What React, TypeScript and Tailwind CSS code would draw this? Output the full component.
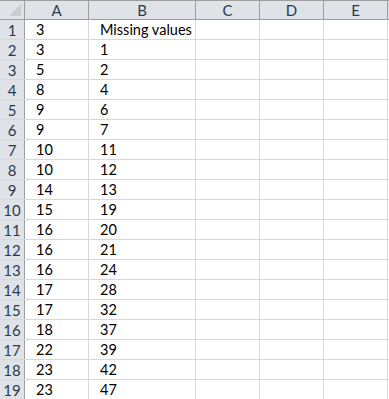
const columns = [
  { name: "A", width: "w-[64px]" },
  { name: "B", width: "w-[107px]" },
  { name: "C", width: "w-[64px]" },
  { name: "D", width: "w-[64px]" },
  { name: "E", width: "w-[64px]" },
];

const rows: [string, string][] = [
  ["3", "Missing values"],
  ["3", "1"],
  ["5", "2"],
  ["8", "4"],
  ["9", "6"],
  ["9", "7"],
  ["10", "11"],
  ["10", "12"],
  ["14", "13"],
  ["15", "19"],
  ["16", "20"],
  ["16", "21"],
  ["16", "24"],
  ["17", "28"],
  ["17", "32"],
  ["18", "37"],
  ["22", "39"],
  ["23", "42"],
  ["23", "47"],
];

function CornerMark() {
  return (
    <svg width="12" height="12" viewBox="0 0 12 12" className="absolute bottom-[3px] right-[3px]">
      <path d="M12 0V12H0Z" fill="#c9cdd2" />
    </svg>
  );
}

export default function App() {
  return (
    <div
      className="h-[399px] w-[389px] overflow-hidden bg-white text-[15px] text-black"
      style={{ fontFamily: "Lato, 'Liberation Sans', sans-serif" }}
    >
      <div className="flex h-[20px] border-b border-t border-[#9e9e9e] bg-[#dfe3e8]">
        <div className="relative w-[25px] shrink-0 border-r border-[#9e9e9e]">
          <CornerMark />
        </div>
        {columns.map((col) => (
          <div
            key={col.name}
            className={`${col.width} flex shrink-0 items-center justify-center border-r border-[#9e9e9e] pt-[1px] leading-none text-[#2b3a4e]`}
          >
            {col.name}
          </div>
        ))}
      </div>

      {rows.map(([a, b], i) => (
        <div key={i} className="flex h-[20px] border-b border-[#d8d8d8]">
          <div className="flex w-[25px] shrink-0 items-center justify-center border-r border-[#9e9e9e] bg-[#dfe3e8] pt-[2px] leading-none text-[#2b3a4e]">
            {i + 1}
          </div>
          <div className="flex w-[64px] shrink-0 items-center border-r border-[#d8d8d8] pl-[11px] pt-[2px] text-[14.5px] leading-none">
            {a}
          </div>
          <div className="flex w-[107px] shrink-0 items-center whitespace-nowrap border-r border-[#d8d8d8] pl-[11px] pt-[2px] text-[14.5px] leading-none">
            {b}
          </div>
          <div className="w-[64px] shrink-0 border-r border-[#d8d8d8]" />
          <div className="w-[64px] shrink-0 border-r border-[#d8d8d8]" />
          <div className="w-[64px] shrink-0 border-r border-[#d8d8d8]" />
        </div>
      ))}
    </div>
  );
}
